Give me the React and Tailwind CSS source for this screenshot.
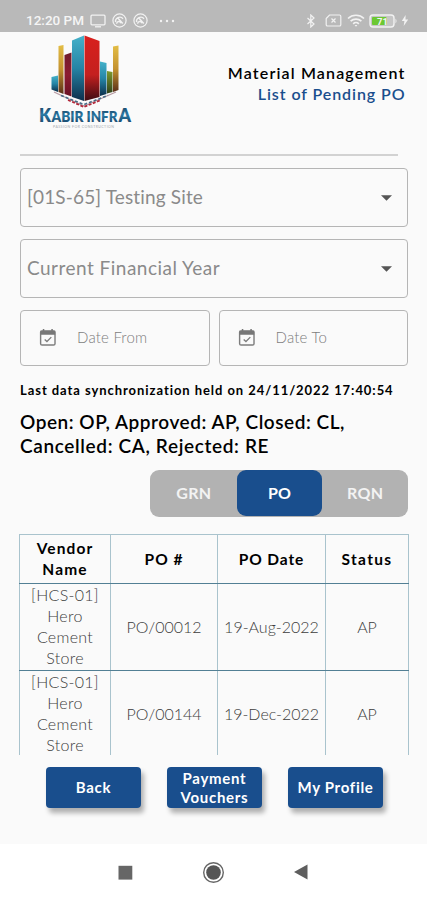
import { useState } from "react";

const orders = [
  {
    id: 1,
    vendor: "[HCS-01] Hero Cement Store",
    number: "PO/00012",
    date: "19-Aug-2022",
    status: "AP",
  },
  {
    id: 2,
    vendor: "[HCS-01] Hero Cement Store",
    number: "PO/00144",
    date: "19-Dec-2022",
    status: "AP",
  },
];

function AppIcon() {
  return (
    <svg width="15" height="15" viewBox="0 0 15 15" fill="none" stroke="#f2f2f2">
      <circle cx="7.5" cy="7.5" r="6.6" strokeWidth="1.2" />
      <path d="M3.6 9.200a4.200 4.200 0 0 1 7.400-3.400M5.800 5l5 5.500M4.600 10.800c.2-2.600 3.200-3.200 4.400-.6" strokeWidth="1.4" />
    </svg>
  );
}

function StatusBar() {
  return (
    <div className="flex h-8 items-end justify-between bg-[#b9b9b9] pr-[18px] pb-[3px] pl-[26px] text-[#f5f5f5]">
      <div className="flex h-[17px] items-center">
        <span className="w-[64px] font-['Roboto'] text-[13.500px] font-medium whitespace-nowrap">
          12:20 PM
        </span>
        <svg width="16" height="14" viewBox="0 0 16 14" fill="none" stroke="#f2f2f2" strokeWidth="1.3">
          <rect x="1" y="1.2" width="14" height="9.6" rx="1" />
          <path d="M5 12.8h6" />
        </svg>
        <div className="ml-[6px] flex gap-[6px]">
          <AppIcon />
          <AppIcon />
        </div>
        <svg className="ml-[11px]" width="16" height="4" viewBox="0 0 16 4" fill="#f2f2f2">
          <circle cx="2" cy="2" r="1.2" />
          <circle cx="8" cy="2" r="1.2" />
          <circle cx="14" cy="2" r="1.2" />
        </svg>
      </div>
      <div className="flex h-[17px] items-center">
        <svg width="10" height="14" viewBox="0 0 10 14" fill="none" stroke="#f2f2f2" strokeWidth="1.2">
          <path d="M1.500 4l6.500 6-3.200 3V1L8 4 1.500 10" />
        </svg>
        <svg className="ml-[9px]" width="17" height="13" viewBox="0 0 17 13" fill="none" stroke="#f2f2f2" strokeWidth="1.2">
          <path d="M4.500 1H14.500a1.300 1.300 0 0 1 1.300 1.300v8.400a1.300 1.300 0 0 1-1.300 1.300h-12a1.300 1.300 0 0 1-1.300-1.300V4.500z" />
          <path d="M6.500 4.500l4 4m0-4l-4 4" />
        </svg>
        <svg className="ml-[5px]" width="18" height="13" viewBox="0 0 18 13" fill="none" stroke="#f2f2f2" strokeWidth="1.7">
          <path d="M1 4.500a11.500 11.500 0 0 1 16 0M3.600 7.200a8 8 0 0 1 10.800 0M6.200 9.800a4 4 0 0 1 5.600 0" />
          <path d="M7.600 11l1.400 1.800 1.400-1.800z" fill="#f2f2f2" stroke="none" />
        </svg>
        <svg className="ml-[4px]" width="29" height="14" viewBox="0 0 29 14">
          <rect x="1" y="1" width="24" height="12" rx="3" fill="#c6c6c6" stroke="#f2f2f2" strokeWidth="1.4" />
          <path d="M26.500 4.500q2 2.500 0 5z" fill="#f2f2f2" />
          <rect x="3" y="3" width="14.500" height="8" rx="1" fill="#6cc832" />
          <text x="8" y="10.500" fill="#f5f5f5" fontFamily="Roboto" fontWeight="700" fontSize="9.500">71</text>
        </svg>
        <svg className="ml-[3px]" width="8" height="11" viewBox="0 0 8 11" fill="#f2f2f2">
          <path d="M4.600 0L0.800 6h2.600L2.700 11 7.200 4.600H4.500z" />
        </svg>
      </div>
    </div>
  );
}

function Logo() {
  return (
    <svg width="96" height="98" viewBox="0 0 96 98">
      <defs>
        <linearGradient id="blue" x1="0" y1="0" x2="0" y2="1">
          <stop offset="0" stopColor="#45b2ca" />
          <stop offset="0.5" stopColor="#2584a5" />
          <stop offset="1" stopColor="#0c2f4c" />
        </linearGradient>
        <linearGradient id="red" x1="0" y1="0" x2="0" y2="1">
          <stop offset="0" stopColor="#d8201d" />
          <stop offset="0.6" stopColor="#c4201f" />
          <stop offset="1" stopColor="#3d0c12" />
        </linearGradient>
        <linearGradient id="gold" x1="0" y1="0" x2="0" y2="1">
          <stop offset="0" stopColor="#e3bd45" />
          <stop offset="0.5" stopColor="#c4922f" />
          <stop offset="1" stopColor="#5a2f18" />
        </linearGradient>
        <linearGradient id="maroon" x1="0" y1="0" x2="0" y2="1">
          <stop offset="0" stopColor="#6f1c2b" />
          <stop offset="0.5" stopColor="#8c1c31" />
          <stop offset="1" stopColor="#6b1224" />
        </linearGradient>
        <linearGradient id="green" x1="0" y1="0" x2="0" y2="1">
          <stop offset="0" stopColor="#7f9a2f" />
          <stop offset="1" stopColor="#30421a" />
        </linearGradient>
        <linearGradient id="name" x1="0" y1="0" x2="0" y2="1">
          <stop offset="0" stopColor="#12304d" />
          <stop offset="0.5" stopColor="#2a7aa5" />
          <stop offset="1" stopColor="#143a5c" />
        </linearGradient>
      </defs>
      <path d="M16 60l30 14 32-14" fill="none" stroke="#b79aa2" strokeWidth="1.200" />
      <path d="M23 63.500l23 9 24-9" fill="none" stroke="#476b86" strokeWidth="1.600" strokeDasharray="3 2" />
      <path d="M30 68l16 7 17-7" fill="none" stroke="#b3283a" strokeWidth="1.700" strokeDasharray="3 1.500" />
      <path d="M13.500 45l6.500-1.500V60l-6.500-2.500z" fill="url(#blue)" />
      <path d="M20.500 14l5-1v49l-5-2z" fill="url(#gold)" />
      <path d="M26.500 23l7-2.500v44l-7-2.500z" fill="url(#maroon)" />
      <path d="M34 8.500l12-5v65.500L34 65z" fill="url(#blue)" />
      <path d="M46.500 3.500L61.500 9v56L46.500 69z" fill="url(#red)" />
      <path d="M62 29.500l6.500 1.500v31L62 64z" fill="url(#blue)" />
      <path d="M69 39l5.500 1v20L69 61.500z" fill="url(#green)" />
      <path d="M75 14.500l5.500-1v44.500l-5.500 2z" fill="url(#gold)" />
      <g fill="url(#name)" fontFamily="Lato, sans-serif" fontWeight="800">
        <text x="1" y="89.500" fontSize="18.500" textLength="12" lengthAdjust="spacingAndGlyphs">K</text>
        <text x="13.500" y="89.500" fontSize="15" textLength="32" lengthAdjust="spacingAndGlyphs">ABIR</text>
        <text x="48.500" y="89.500" fontSize="15" textLength="31" lengthAdjust="spacingAndGlyphs">INFR</text>
        <text x="80.500" y="89.500" fontSize="18.500" textLength="12.500" lengthAdjust="spacingAndGlyphs">A</text>
      </g>
      <text x="15" y="95.500" fill="#a3a8ae" fontFamily="Lato, sans-serif" fontSize="3.500" textLength="61">
        PASSION FOR CONSTRUCTION
      </text>
    </svg>
  );
}

function SelectBox({ children }) {
  return (
    <div className="flex h-[59px] items-center justify-between rounded-[4px] border border-[#b5b5b5] pr-[15px] pl-[6px] text-[19px] text-[#8a8a8a]">
      {children}
      <svg width="11" height="6" viewBox="0 0 11 6">
        <path d="M0 0.300h11L5.500 5.800z" fill="#555" />
      </svg>
    </div>
  );
}

function DateBox({ label }) {
  return (
    <div className="flex h-14 flex-1 items-center rounded-[4px] border border-[#b5b5b5] pl-[18px]">
      <svg className="-mt-px" width="18" height="19" viewBox="0 0 19 20" fill="none">
        <rect x="1.700" y="3" width="15.200" height="15" rx="1.500" stroke="#7d7d7d" strokeWidth="1.500" />
        <path d="M1.500 3h15.600v4H1.500zM4 1h1.600v2.500H4zM13 1h1.600v2.500H13z" fill="#777" />
        <path d="M6 12l2.400 2.200 4.600-4.600" stroke="#7d7d7d" strokeWidth="1.400" />
      </svg>
      <span className="-mt-px ml-[20px] text-[15px] font-light tracking-[0.2px] text-[#7d7d7d]">{label}</span>
    </div>
  );
}

function ActionButton({ children }) {
  return (
    <button className="h-[41px] w-[95px] rounded-[4px] bg-[#194e8d] text-[15px] leading-[19px] font-bold tracking-[0.700px] text-white shadow-[3px_5px_5px_rgba(0,0,0,0.3)]">
      {children}
    </button>
  );
}

export default function App() {
  const [tab, setTab] = useState("PO");

  return (
    <div className="flex h-[900px] w-[427px] flex-col overflow-hidden bg-[#fafafa] font-['Lato','Liberation_Sans',sans-serif] text-black">
      <StatusBar />

      <header className="flex h-[122px] justify-between pr-[21.500px] pl-[38px]">
        <Logo />
        <div className="pt-[30px] text-right text-[16px] leading-[21px] font-semibold">
          <h1 className="tracking-[1.150px]">Material Management</h1>
          <h2 className="tracking-[0.920px] text-[#194e8d]">List of Pending PO</h2>
        </div>
      </header>
      <div className="mr-[29px] ml-5 h-[2px] shrink-0 bg-[#d2d2d2]" />

      <main className="flex flex-col pr-[19px] pl-5">
        <div className="mt-3 flex flex-col gap-3">
          <SelectBox>
            <span className="tracking-[0.150px]">[01S-65] Testing Site</span>
          </SelectBox>
          <SelectBox>
            <span className="tracking-[0.480px]">Current Financial Year</span>
          </SelectBox>
          <div className="flex gap-[9px]">
            <DateBox label="Date From" />
            <DateBox label="Date To" />
          </div>
        </div>

        <p className="mt-[15px] text-[13px] leading-[18px] font-bold tracking-[0.940px] whitespace-nowrap">
          Last data synchronization held on 24/11/2022 17:40:54
        </p>
        <p className="mt-[11px] text-[19px] leading-6 font-semibold">
          <span className="block tracking-[0.530px] whitespace-nowrap">Open: OP, Approved: AP, Closed: CL,</span>
          <span className="block tracking-[0.640px] whitespace-nowrap">Cancelled: CA, Rejected: RE</span>
        </p>

        <div className="mt-3 flex h-[47px] w-[258px] self-end rounded-[9px] bg-[#b2b2b2] pb-px pl-px">
          {["GRN", "PO", "RQN"].map((name) => (
            <button
              key={name}
              onClick={() => setTab(name)}
              className={
                tab === name
                  ? "flex-1 rounded-[9px] bg-[#194e8d] text-[16px] font-bold text-white"
                  : "flex-1 text-[16px] font-bold tracking-[0.3px] text-[#f3f3f3]"
              }
            >
              {name}
            </button>
          ))}
        </div>

        <div className="mt-[17px] -mr-1 -ml-px h-[221px] overflow-hidden">
          <table className="w-[389px] table-fixed border-collapse text-center text-[16px] leading-[21px]">
            <colgroup>
              <col className="w-[91px]" />
              <col className="w-[107px]" />
              <col className="w-[108px]" />
              <col className="w-[83px]" />
            </colgroup>
            <thead>
              <tr className="h-[49px] text-[15.500px]">
                <th className="border border-[#a9c3cd] border-b-[#527f94] px-3 font-bold tracking-[1.100px]">
                  Vendor Name
                </th>
                <th className="border border-[#a9c3cd] border-b-[#527f94] font-bold tracking-[1px]">PO #</th>
                <th className="border border-[#a9c3cd] border-b-[#527f94] font-bold tracking-[0.900px]">PO Date</th>
                <th className="border border-[#a9c3cd] border-b-[#527f94] font-bold tracking-[1.300px]">Status</th>
              </tr>
            </thead>
            <tbody>
              {orders.map((order) => (
                <tr key={order.id} className="h-[86px] font-light text-[#3c3c3c]">
                  <td className="border border-[#a9c3cd] border-y-[#527f94] px-2 pb-0.5 tracking-[0.300px]">
                    {order.vendor}
                  </td>
                  <td className="border border-[#a9c3cd] border-y-[#527f94] pb-0.5">{order.number}</td>
                  <td className="border border-[#a9c3cd] border-y-[#527f94] pb-0.5 whitespace-nowrap">{order.date}</td>
                  <td className="border border-[#a9c3cd] border-y-[#527f94] pb-0.5">{order.status}</td>
                </tr>
              ))}
            </tbody>
          </table>
        </div>
      </main>

      <div className="mt-3 flex gap-[26px] pl-[46px]">
        <ActionButton>Back</ActionButton>
        <ActionButton>Payment Vouchers</ActionButton>
        <ActionButton>My Profile</ActionButton>
      </div>

      <nav className="mt-auto flex h-14 items-center bg-white pl-[118px]">
        <svg width="15" height="15" viewBox="0 0 15 15">
          <rect x="0.500" y="0.800" width="13.800" height="13.800" fill="#666" />
        </svg>
        <svg className="ml-[69px]" width="23" height="23" viewBox="0 0 23 23">
          <circle cx="11.500" cy="11.500" r="9.800" fill="none" stroke="#666" strokeWidth="1.400" />
          <circle cx="11.500" cy="11.500" r="7.300" fill="#555" />
        </svg>
        <svg className="ml-[69px]" width="15" height="16" viewBox="0 0 15 16">
          <path d="M0 8L13.500 0.500v15z" fill="#5e5e5e" />
        </svg>
      </nav>
    </div>
  );
}
